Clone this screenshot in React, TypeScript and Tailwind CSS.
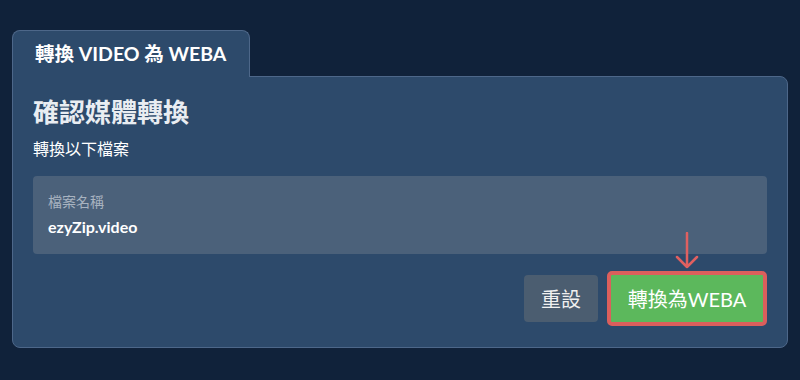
import React from 'react';

const FONT = { fontFamily: 'Lato, "Noto Sans CJK TC", sans-serif' };

export default function App() {
  return (
    <div className="w-[800px] h-[380px] bg-[#10223a] pt-[30px] px-[12px]" style={FONT}>
      {/* Tab */}
      <div className="relative z-10 w-[238px] h-[47px] bg-[#2d4a6b] border border-b-0 border-[#4d6789] rounded-t-[8px] flex items-center pl-[22px]">
        <span className="text-white text-[19.5px] font-bold">轉換 VIDEO 為 WEBA</span>
      </div>

      {/* Panel */}
      <div className="-mt-px h-[272px] bg-[#2d4a6b] border border-[#4d6789] rounded-b-[8px] rounded-tr-[8px] px-[20px] pt-[18px]">
        <h2 className="text-[#e9edf2] text-[26px] font-bold leading-[34px]">確認媒體轉換</h2>
        <p className="text-white text-[16px] mt-[10px] leading-[20px]">轉換以下檔案</p>

        <div className="mt-[17px] h-[78px] bg-[#4b617a] rounded-[4px] px-[15px] pt-[17px]">
          <div className="text-[#a8b3c0] text-[14px] leading-[18px]">檔案名稱</div>
          <div className="text-white text-[16px] font-bold leading-[20px] mt-[6px]">ezyZip.video</div>
        </div>

        <div className="flex justify-end items-center gap-[9px] mt-[17px] relative">
          <button className="w-[74px] h-[47px] bg-[#4b5d70] rounded-[4px] text-[#f0f0f0] text-[20px]">重設</button>
          <div className="relative">
            <svg className="absolute left-1/2 -translate-x-1/2 -top-[39px]" width="24" height="38" viewBox="0 0 24 38">
              <path d="M12 1 V35 M2 25 L12 35 L22 25" fill="none" stroke="#e06060" strokeWidth="2.5" strokeLinecap="round" strokeLinejoin="round" />
            </svg>
            <button className="w-[160px] h-[55px] bg-[#5cb85c] border-[4px] border-[#db5f5c] rounded-[5px] text-white text-[20px]">轉換為WEBA</button>
          </div>
        </div>
      </div>
    </div>
  );
}
